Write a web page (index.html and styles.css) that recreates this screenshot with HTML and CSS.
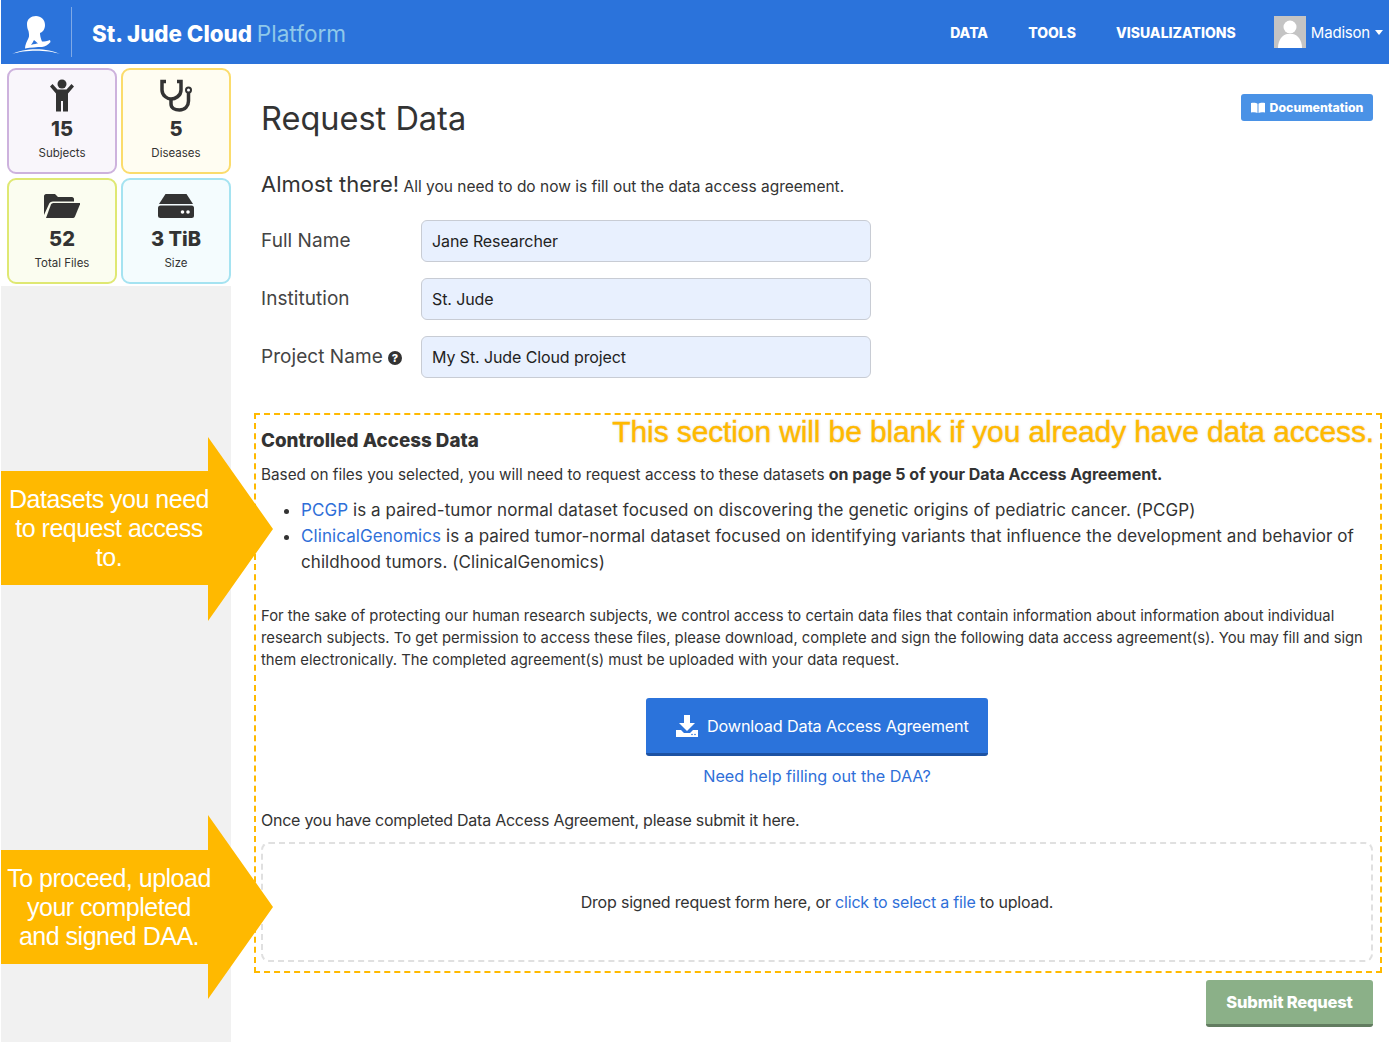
FILE: index.html
```html
<!DOCTYPE html>
<html lang="en">
<head>
<meta charset="utf-8">
<title>Request Data</title>
<link rel="stylesheet" href="styles.css">
</head>
<body>
<header class="topbar">
  <div class="brand">
    <svg class="logo" width="48" height="42" viewBox="0 0 48 42"><path fill="#fff" d="M0 39C12 32.500 36 32.500 48 39C36 34.500 12 34.500 0 39Z"/><path fill="#fff" fill-rule="evenodd" d="M15 9C15 4 19 1 24 1C29 1 33 4.500 33 10C33 14 31 17 28 18C28 20 28.500 23 30 26.500C33 26.500 35 26 38 25L38.500 27C36 30 33 31.500 30 32C25 32 19 32.500 13 33.500C13 30 15 26 16.500 23C17.500 21 17 19 16.500 16C15.500 14 15 12 15 9ZM19 30C22 29 25 28.500 26 28.500C24.500 27 23 26 22 25C21 27 20 28.500 19 30Z"/></svg>
    <span class="brand-rule"></span>
    <span class="brand-name">St. Jude Cloud <span class="brand-light">Platform</span></span>
  </div>
  <nav class="nav">
    <a class="nav-link">DATA</a>
    <a class="nav-link">TOOLS</a>
    <a class="nav-link">VISUALIZATIONS</a>
    <div class="user">
      <svg class="avatar" width="32" height="32" viewBox="0 0 32 32"><rect width="32" height="32" fill="#c4c4c4"/><circle cx="16" cy="11" r="6.500" fill="#fff"/><path fill="#fff" d="M4 32C4 23 9 19 13 18H19C23 19 28 23 28 32Z"/></svg>
      <span class="user-name">Madison</span>
      <span class="caret"></span>
    </div>
  </nav>
</header>
<div class="page">
  <aside class="sidebar">
    <div class="stats">
      <div class="stat stat-purple">
        <svg class="stat-icon" width="36" height="36" viewBox="0 0 36 36"><circle cx="18" cy="6" r="4.500" fill="#333"/><path fill="#333" d="M6 8.500L8.500 6L13.500 11.500H22.500L27.500 6L30 8.500L24 15.500V33.500H19V23H17V33.500H12V15.500Z"/></svg>
        <div class="stat-value">15</div>
        <div class="stat-label">Subjects</div>
      </div>
      <div class="stat stat-yellow">
        <svg class="stat-icon" width="36" height="36" viewBox="0 0 36 36"><path fill="none" stroke="#333" stroke-width="3.500" d="M8 3.500H4V12C4 18 10 21 13 21C17 21 23 18 23 12V3.500H19"/><path fill="none" stroke="#333" stroke-width="3.500" d="M13 21V26C13 30 17 32 21.500 32C27 32 30.500 28 30.500 23V15"/><circle cx="30.500" cy="12" r="2.500" fill="#fff" stroke="#333" stroke-width="2"/></svg>
        <div class="stat-value">5</div>
        <div class="stat-label">Diseases</div>
      </div>
      <div class="stat stat-lime">
        <svg class="stat-icon" width="36" height="36" viewBox="0 0 36 36"><path fill="#333" d="M0 27V8C0 7 1 6 2 6H11L14 9H28C29 9 30 10 30 11V13.500H9C7 13.500 5.500 14.500 5 16L0 27Z"/><path fill="#333" d="M7 16.500C7.500 15.500 8.500 15 10 15H36.500L31 28.500C30.500 29.500 29.500 30 28.500 30H2Z"/></svg>
        <div class="stat-value">52</div>
        <div class="stat-label">Total Files</div>
      </div>
      <div class="stat stat-cyan">
        <svg class="stat-icon" width="36" height="36" viewBox="0 0 36 36"><path fill="#333" d="M7.500 6H28.500L35 16H1Z"/><rect y="17.500" width="36" height="12.500" rx="2.500" fill="#333"/><circle cx="24.500" cy="24" r="1.800" fill="#fff"/><circle cx="30" cy="24" r="1.800" fill="#fff"/></svg>
        <div class="stat-value">3 TiB</div>
        <div class="stat-label">Size</div>
      </div>
    </div>
    <div class="sidebar-fill"></div>
  </aside>
  <main class="main">
    <div class="title-row">
      <h1 class="title">Request Data</h1>
      <a class="doc-btn">
        <svg width="14" height="11" viewBox="0 0 14 11"><path fill="#fff" d="M0 1C2.500 .5 5 .5 6.500 1.800V11C5 10 2.500 10 0 10.500ZM14 1C11.500 .5 9 .5 7.500 1.800V11C9 10 11.500 10 14 10.500Z"/></svg>
        Documentation
      </a>
    </div>
    <p class="lead"><span class="lead-big">Almost there!</span> All you need to do now is fill out the data access agreement.</p>
    <form class="form">
      <div class="field"><label class="field-label">Full Name</label><input class="field-input" value="Jane Researcher"></div>
      <div class="field"><label class="field-label">Institution</label><input class="field-input" value="St. Jude"></div>
      <div class="field"><label class="field-label">Project Name
        <svg class="help" width="14" height="14" viewBox="0 0 14 14"><circle cx="7" cy="7" r="7" fill="#333"/><text x="7" y="11" text-anchor="middle" class="help-mark">?</text></svg></label><input class="field-input" value="My St. Jude Cloud project"></div>
    </form>
    <section class="access">
      <div class="note">This section will be blank if you already have data access.</div>
      <h2 class="access-title">Controlled Access Data</h2>
      <p class="access-line">Based on files you selected, you will need to request access to these datasets <b>on page 5 of your Data Access Agreement.</b></p>
      <ul class="datasets">
        <li><a class="link">PCGP</a> is a paired-tumor normal dataset focused on discovering the genetic origins of pediatric cancer. (PCGP)</li>
        <li><a class="link">ClinicalGenomics</a> is a paired tumor-normal dataset focused on identifying variants that influence the development and behavior of childhood tumors. (ClinicalGenomics)</li>
      </ul>
      <p class="access-text">For the sake of protecting our human research subjects, we control access to certain data files that contain information about information about individual research subjects. To get permission to access these files, please download, complete and sign the following data access agreement(s). You may fill and sign them electronically. The completed agreement(s) must be uploaded with your data request.</p>
      <div class="download">
        <a class="download-btn">
          <svg width="22" height="22" viewBox="0 0 22 22"><path fill="#fff" d="M8 0H14V8H19L11 16L3 8H8Z"/><path fill="#fff" d="M0 15H5L8 18H14L17 15H22V22H0Z"/><circle cx="16" cy="19.500" r=".8" fill="#2b73db"/><circle cx="19" cy="19.500" r=".8" fill="#2b73db"/></svg>
          Download Data Access Agreement
        </a>
        <a class="link help-link">Need help filling out the DAA?</a>
      </div>
      <p class="once">Once you have completed Data Access Agreement, please submit it here.</p>
      <div class="drop">Drop signed request form here, or&nbsp;<a class="link">click to select a file</a>&nbsp;to upload.</div>
    </section>
    <div class="submit-row"><button class="submit" type="button">Submit Request</button></div>
  </main>
</div>
<div class="callout callout-one">
  <svg width="272" height="184" viewBox="0 0 272 184"><path fill="#ffb900" d="M0 34H207V0L272 92L207 184V148H0Z"/></svg>
  <div class="callout-text">Datasets you need to request access to.</div>
</div>
<div class="callout callout-two">
  <svg width="272" height="184" viewBox="0 0 272 184"><path fill="#ffb900" d="M0 35H207V0L272 92L207 184V149H0Z"/></svg>
  <div class="callout-text">To proceed, upload your completed and signed DAA.</div>
</div>
</body>
</html>
```
FILE: styles.css
```css
* { box-sizing: border-box; }
html, body { margin: 0; padding: 0; }
body {
  width: 1389px; height: 1042px; overflow: hidden; position: relative;
  font-family: Inter, "Liberation Sans", sans-serif; color: #333; background: #fff;
  font-size: 15px;
}
p, h1, h2, ul { margin: 0; padding: 0; }
.topbar {
  height: 64px; margin-left: 1px; background: #2b73db; color: #fff;
  display: flex; align-items: center; justify-content: space-between;
}
.brand { display: flex; align-items: center; }
.logo { margin-left: 11px; margin-top: 8px; }
.brand-rule { width: 1px; height: 50px; background: #7fa9e6; margin-left: 11px; }
.brand-name { margin-left: 20px; font-size: 22.300px; font-weight: 800; padding-top: 2px; }
.brand-light { font-weight: 400; color: #8fc8ea; font-size: 22.600px; }
.nav { display: flex; align-items: center; }
.nav-link { font-size: 14px; font-weight: 800; margin-right: 40px; }
.user { display: flex; align-items: center; margin-right: 6px; margin-left: -2px; }
.avatar { display: block; }
.user-name { margin-left: 5px; font-size: 15px; letter-spacing: -.2px; }
.caret { margin-left: 5px; border-top: 5px solid #fff; border-left: 4.500px solid transparent; border-right: 4.500px solid transparent; }
.page { display: flex; height: 978px; margin-left: 1px; }
.sidebar { width: 230px; display: flex; flex-direction: column; flex: none; }
.stats { display: grid; grid-template-columns: 110px 110px; grid-auto-rows: 106px; gap: 4px; padding: 4px 0 0 6px; height: 222px; }
.stat { border: 2px solid; border-radius: 9px; display: flex; flex-direction: column; align-items: center; padding-top: 8px; }
.stat-icon { display: block; height: 36px; }
.stat-value { font-size: 20px; font-weight: 800; line-height: 24px; margin-top: 3px; }
.stat-label { font-size: 11.500px; line-height: 14px; margin-top: 5px; }
.stat-purple { border-color: #cdb2dd; background: #f9f6fb; }
.stat-yellow { border-color: #fbdc6c; background: #fffdf2; }
.stat-lime { border-color: #dfe873; background: #fbfdf0; }
.stat-cyan { border-color: #a5e3f1; background: #f4fcfe; }
.sidebar-fill { flex: 1; background: #f1f1f1; }
.main { width: 1158px; min-width: 0; flex: none; padding: 0 16px 0 30px; }
.title-row { display: flex; justify-content: space-between; padding-top: 30px; height: 105px; }
.title { font-size: 32.500px; font-weight: 400; line-height: 50px; }
.doc-btn { width: 132px; height: 27px; background: #4a92e6; border-radius: 3px; color: #fff; font-size: 12.300px; font-weight: 800; display: flex; align-items: center; justify-content: center; gap: 5px; }
.lead { line-height: 30px; font-size: 15.500px; }
.lead-big { font-size: 22px; }
.form { margin-top: 18px; display: flex; flex-direction: column; gap: 16px; }
.field { display: flex; align-items: center; height: 42px; }
.field-label { width: 160px; font-size: 19px; letter-spacing: .05px; color: #444; padding-bottom: 2px; }
.help { vertical-align: -2px; }
.help-mark { fill: #fff; font-size: 11px; font-weight: 800; font-family: Inter, sans-serif; }
.field-input { width: 450px; height: 42px; padding: 0 10px; border: 1px solid #c8ccd4; border-radius: 6px; background: #e8f0fe; font: 400 16px Inter, "Liberation Sans", sans-serif; color: #222; letter-spacing: -.1px; }
.access {
  position: relative; margin: 35px 0 0 -7px; height: 560px; width: 1128px;
  border: 2px dashed #ffb900; padding: 0 7px 0 5px;
}
.note {
  position: absolute; top: -1px; right: 6px; font-family: "Liberation Sans", sans-serif; font-size: 30px; letter-spacing: -.12px;
  color: #ffb900; line-height: 36px; -webkit-text-stroke: .4px #ffb900; white-space: nowrap;
  text-shadow: 0 0 3px #d8d8d8, 0 0 2px #fff, 0 0 2px #fff;
}
.access-title { font-size: 18.800px; font-weight: 800; line-height: 24px; padding-top: 14px; height: 38px; }
.access-line { margin-top: 10px; line-height: 22px; font-size: 15.300px; }
.access-line b { font-size: 16px; font-weight: 700; }
.datasets { margin-top: 11px; padding-left: 40px; line-height: 26px; font-size: 17px; letter-spacing: .08px; }
.access-text { margin-top: 30px; line-height: 22px; font-size: 14.800px; }
.link { color: #2f6fd8; }
.download { display: flex; flex-direction: column; align-items: center; margin-top: 27px; }
.download-btn { width: 342px; height: 58px; padding-left: 30px; background: #2b73db; border-bottom: 3px solid #1d52a3; border-radius: 3px; color: #fff; font-size: 16.300px; letter-spacing: -.2px; display: flex; align-items: center; gap: 9px; }
.help-link { margin-top: 9px; line-height: 22px; font-size: 16.200px; }
.once { margin-top: 22px; line-height: 22px; font-size: 16px; letter-spacing: -.25px; }
.drop {
  margin-top: 11px; height: 120px; border: 2px dashed #e0e0e0; border-radius: 8px; display: flex; align-items: center; justify-content: center; font-size: 16px; letter-spacing: -.2px;
}
.submit-row { display: flex; justify-content: flex-end; padding-top: 7px; }
.submit { width: 167px; height: 47px; background: #8bb088; border: 0; border-bottom: 3px solid #627c60; border-radius: 3px; color: #fff; font: 800 16.500px Inter, sans-serif; letter-spacing: -.2px; }
.callout { position: absolute; left: 1px; width: 272px; height: 184px; }
.callout svg { display: block; }
.callout-one { top: 437px; }
.callout-two { top: 815px; }
.callout-text {
  position: absolute; left: 0; top: 0; width: 216px; height: 184px; padding: 0 4px; display: flex; align-items: center; justify-content: center; text-align: center;
  color: #fff; font-family: "Liberation Sans", sans-serif; font-size: 25px; line-height: 29px; letter-spacing: -.5px;
}
.callout-one .callout-text { height: 182px; }
```
